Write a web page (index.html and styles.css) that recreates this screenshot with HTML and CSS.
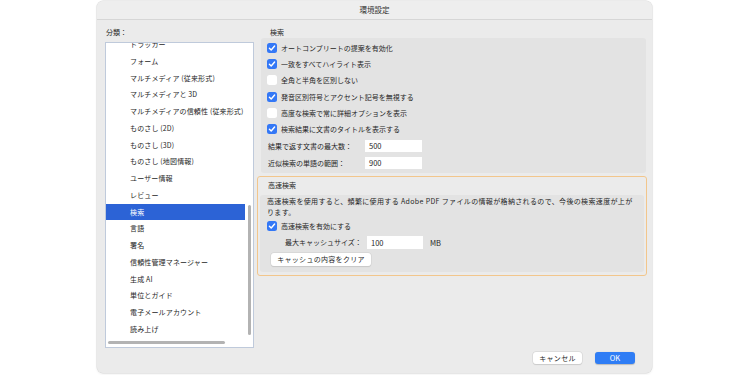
FILE: index.html
```html
<!DOCTYPE html>
<html lang="ja">
<head>
<meta charset="utf-8">
<title>環境設定</title>
<link rel="stylesheet" href="styles.css">
</head>
<body>
<div class="window">
  <div class="titlebar">環境設定</div>
  <div class="main">
    <div class="left">
      <div class="label">分類：</div>
      <div class="listbox">
        <ul class="list">
          <li>トラッカー</li>
          <li>フォーム</li>
          <li>マルチメディア (従来形式)</li>
          <li>マルチメディアと 3D</li>
          <li>マルチメディアの信頼性 (従来形式)</li>
          <li>ものさし (2D)</li>
          <li>ものさし (3D)</li>
          <li>ものさし (地図情報)</li>
          <li>ユーザー情報</li>
          <li>レビュー</li>
          <li class="selected">検索</li>
          <li>言語</li>
          <li>署名</li>
          <li>信頼性管理マネージャー</li>
          <li>生成 AI</li>
          <li>単位とガイド</li>
          <li>電子メールアカウント</li>
          <li>読み上げ</li>
        </ul>
        <div class="vscroll"></div>
        <div class="hscroll"></div>
      </div>
    </div>
    <div class="right">
      <div class="sec-title">検索</div>
      <div class="panel">
        <div class="row"><span class="cb on"><svg viewBox="0 0 10 10"><polyline points="2.4,5.2 4.2,7 7.6,3"/></svg></span>オートコンプリートの提案を有効化</div>
        <div class="row"><span class="cb on"><svg viewBox="0 0 10 10"><polyline points="2.4,5.2 4.2,7 7.6,3"/></svg></span>一致をすべてハイライト表示</div>
        <div class="row"><span class="cb"></span>全角と半角を区別しない</div>
        <div class="row"><span class="cb on"><svg viewBox="0 0 10 10"><polyline points="2.4,5.2 4.2,7 7.6,3"/></svg></span>発音区別符号とアクセント記号を無視する</div>
        <div class="row"><span class="cb"></span>高度な検索で常に詳細オプションを表示</div>
        <div class="row"><span class="cb on"><svg viewBox="0 0 10 10"><polyline points="2.4,5.2 4.2,7 7.6,3"/></svg></span>検索結果に文書のタイトルを表示する</div>
        <div class="field-row"><span class="field-label">結果で返す文書の最大数：</span><span class="input">500</span></div>
        <div class="field-row"><span class="field-label">近似検索の単語の範囲：</span><span class="input">900</span></div>
      </div>
      <div class="fast">
        <div class="fast-title">高速検索</div>
        <div class="fast-panel">
          <p class="desc">高速検索を使用すると、頻繁に使用する Adobe PDF ファイルの情報が格納されるので、今後の検索速度が上が<br>ります。</p>
          <div class="row"><span class="cb on"><svg viewBox="0 0 10 10"><polyline points="2.4,5.2 4.2,7 7.6,3"/></svg></span>高速検索を有効にする</div>
          <div class="cache-row"><span class="cache-label">最大キャッシュサイズ：</span><span class="input wide">100</span><span class="unit">MB</span></div>
          <button class="btn clear">キャッシュの内容をクリア</button>
        </div>
      </div>
    </div>
  </div>
  <div class="footer">
    <button class="btn cancel">キャンセル</button>
    <button class="btn ok">OK</button>
  </div>
</div>
</body>
</html>
```

FILE: styles.css
```css
* { box-sizing: border-box; }
html, body {
  margin: 0;
  padding: 0;
  background: #ffffff;
  width: 750px;
  height: 375px;
  overflow: hidden;
  font-family: "Noto Sans CJK JP", "Noto Sans", sans-serif;
  font-size: 7px;
  color: #262626;
}
.window {
  margin: 1px 0 0 97px;
  width: 555px;
  height: 372px;
  background: #ebebeb;
  border-radius: 6px;
  box-shadow: 0 0 0 0.5px #d9d9d9, 0 1px 3px rgba(0,0,0,0.08);
  overflow: hidden;
}
.titlebar {
  height: 19px;
  line-height: 18px;
  text-align: center;
  font-size: 7.5px;
  color: #2e2e2e;
  background: #eeeeee;
  border-bottom: 1px solid #d6d6d6;
}
.main {
  display: flex;
  gap: 3px;
  padding: 7px 0 0 8px;
}
.left { width: 149px; }
.label {
  height: 10px;
  line-height: 10px;
  margin-bottom: 5px;
  padding-left: 1px;
}
.listbox {
  position: relative;
  height: 306px;
  background: #ffffff;
  border: 1px solid #bfcadb;
  overflow: hidden;
}
.list {
  list-style: none;
  margin: -7px 0 0 0;
  padding: 0;
}
.list li {
  height: 16.75px;
  line-height: 16.75px;
  padding-left: 24px;
  margin-right: 8px;
  white-space: nowrap;
  letter-spacing: 0.15px;
}
.list li.selected {
  background: #2c63d6;
  color: #ffffff;
}
.vscroll {
  position: absolute;
  right: 2px;
  top: 162px;
  width: 3px;
  height: 130px;
  border-radius: 2px;
  background: #b3b3b3;
}
.hscroll {
  position: absolute;
  left: 2px;
  bottom: 3px;
  width: 117px;
  height: 3px;
  border-radius: 2px;
  background: #b3b3b3;
}
.right { width: 390px; }
.sec-title {
  height: 11px;
  line-height: 10px;
  padding-left: 13px;
}
.panel {
  margin: 0 1px 0 4px;
  height: 135px;
  padding: 2px 0 0 6px;
  background: #e3e3e3;
  border-radius: 3px;
}
.row {
  display: flex;
  align-items: center;
  height: 16.2px;
  gap: 4px;
  white-space: nowrap;
}
.cb {
  width: 10px;
  height: 10px;
  border-radius: 2.5px;
  background: #ffffff;
  flex: none;
  display: flex;
}
.cb.on { background: #3478f6; }
.cb svg {
  width: 10px;
  height: 10px;
  fill: none;
  stroke: #ffffff;
  stroke-width: 1.4;
  stroke-linecap: round;
  stroke-linejoin: round;
}
.field-row {
  display: flex;
  align-items: center;
  height: 17px;
  padding-left: 1px;
}
.field-label { width: 97px; }
.input {
  display: inline-block;
  width: 57px;
  height: 12px;
  line-height: 12px;
  background: #ffffff;
  padding-left: 4px;
  font-size: 7.5px;
}
.fast {
  margin-top: 3px;
  height: 100px;
  border: 1.5px solid #f2c68c;
  border-radius: 3px;
  padding: 0 2px 2px 2px;
}
.fast-title {
  height: 17.5px;
  line-height: 17px;
  padding-left: 8px;
}
.fast-panel {
  height: 77px;
  background: #e3e3e3;
  border-radius: 3px;
  padding: 1.5px 0 0 7px;
}
.desc {
  margin: 0;
  line-height: 11px;
  height: 22px;
  letter-spacing: 0.35px;
  white-space: nowrap;
}
.cache-row {
  display: flex;
  align-items: center;
  height: 16px;
  padding-left: 18px;
}
.cache-label { width: 82px; }
.input.wide { width: 56px; height: 13px; line-height: 13px; }
.unit { margin-left: 7px; font-size: 7.5px; }
.btn {
  font-family: "Noto Sans CJK JP", "Noto Sans", sans-serif;
  font-size: 7px;
  color: #262626;
  border: none;
  background: #ffffff;
  border-radius: 3px;
  box-shadow: 0 0 0 0.5px #cfcfcf, 0 0.5px 1px rgba(0,0,0,0.15);
  padding: 0;
  height: 13px;
  line-height: 13px;
}
.clear {
  display: block;
  margin: 3px 0 0 4px;
  width: 100px;
  letter-spacing: 0.3px;
}
.footer {
  display: flex;
  justify-content: flex-end;
  gap: 13px;
  padding: 4px 17px 0 0;
}
.cancel { width: 49px; height: 12px; line-height: 12px; letter-spacing: 0.3px; }
.ok {
  width: 40px;
  height: 12px;
  line-height: 12px;
  background: #2f7df5;
  color: #ffffff;
  box-shadow: 0 0.5px 1px rgba(0,0,0,0.2);
  font-size: 7.5px;
}
```
